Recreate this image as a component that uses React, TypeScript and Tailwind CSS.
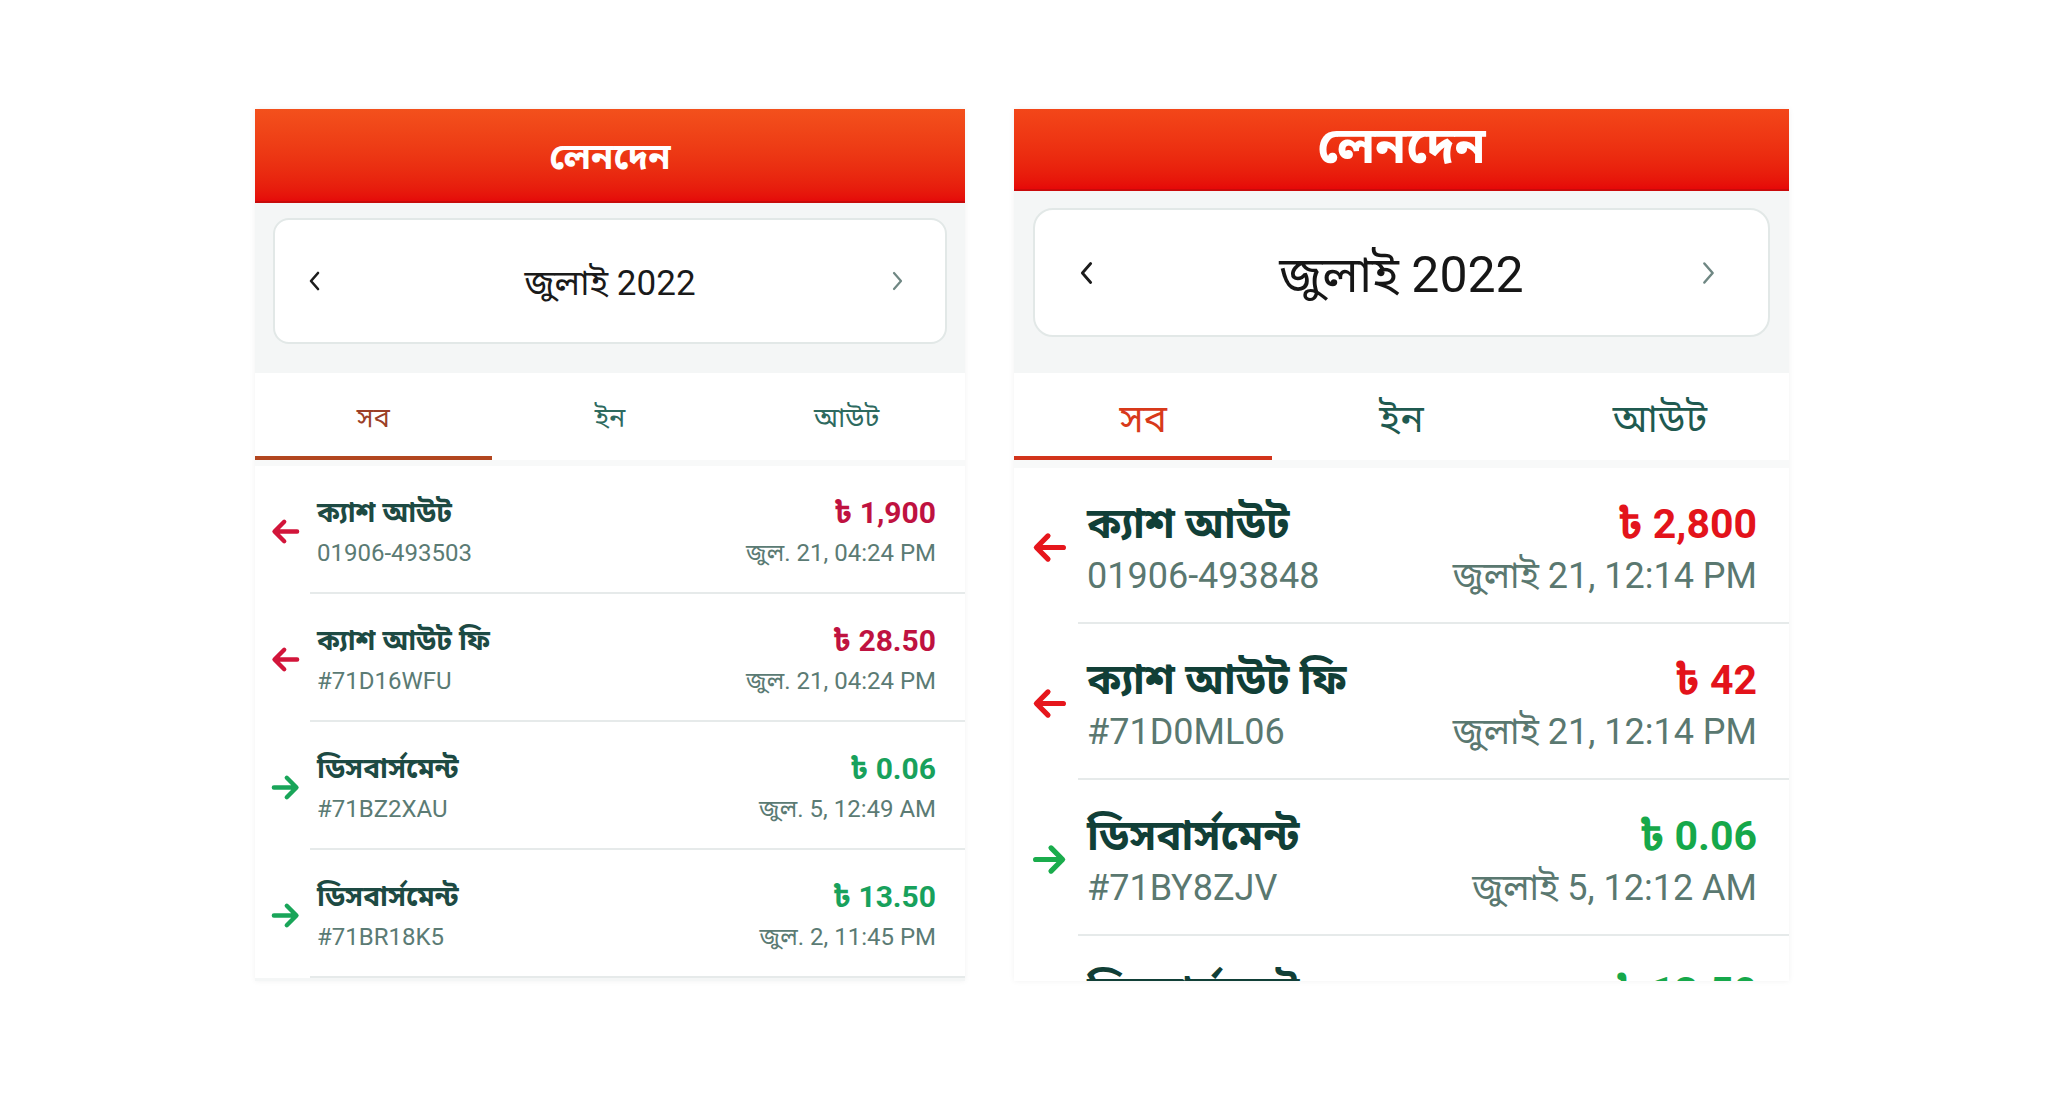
import React from "react";

const BN = "font-['Roboto','Noto_Sans_Bengali','Noto_Sans','Lohit_Bengali','FreeSans',sans-serif]";

type Tx = {
  title: string;
  sub: string;
  amount: string;
  date: string;
  dir: "out" | "in";
};

const leftRows: Tx[] = [
  { title: "ক্যাশ আউট", sub: "01906-493503", amount: "৳ 1,900", date: "জুল. 21, 04:24 PM", dir: "out" },
  { title: "ক্যাশ আউট ফি", sub: "#71D16WFU", amount: "৳ 28.50", date: "জুল. 21, 04:24 PM", dir: "out" },
  { title: "ডিসবার্সমেন্ট", sub: "#71BZ2XAU", amount: "৳ 0.06", date: "জুল. 5, 12:49 AM", dir: "in" },
  { title: "ডিসবার্সমেন্ট", sub: "#71BR18K5", amount: "৳ 13.50", date: "জুল. 2, 11:45 PM", dir: "in" },
];

const rightRows: Tx[] = [
  { title: "ক্যাশ আউট", sub: "01906-493848", amount: "৳ 2,800", date: "জুলাই 21, 12:14 PM", dir: "out" },
  { title: "ক্যাশ আউট ফি", sub: "#71D0ML06", amount: "৳ 42", date: "জুলাই 21, 12:14 PM", dir: "out" },
  { title: "ডিসবার্সমেন্ট", sub: "#71BY8ZJV", amount: "৳ 0.06", date: "জুলাই 5, 12:12 AM", dir: "in" },
  { title: "ডিসবার্সমেন্ট", sub: "#71BR18K5", amount: "৳ 13.50", date: "জুলাই 2, 11:45 PM", dir: "in" },
];

function Arrow({ dir, color, w, h }: { dir: "out" | "in"; color: string; w: number; h: number }) {
  const d = dir === "out" ? "M21 12H4 M11 4.5L3.5 12L11 19.5" : "M3 12H20 M13 4.5L20.5 12L13 19.5";
  return (
    <svg width={w} height={h} viewBox="0 0 24 24" fill="none">
      <path d={d} stroke={color} strokeWidth={3.4} strokeLinecap="round" strokeLinejoin="round" />
    </svg>
  );
}

function Chevron({ dir, color, w, h, sw }: { dir: "l" | "r"; color: string; w: number; h: number; sw: number }) {
  const d = dir === "l" ? "M9 2L2 10L9 18" : "M2 2L9 10L2 18";
  return (
    <svg width={w} height={h} viewBox="0 0 11 20" fill="none">
      <path d={d} stroke={color} strokeWidth={sw} strokeLinecap="round" strokeLinejoin="round" />
    </svg>
  );
}

function LeftPanel() {
  return (
    <div className={`w-[710px] h-[872px] overflow-hidden flex flex-col bg-[#f4f6f6] shadow-[0_0_6px_rgba(0,0,0,0.06)] ${BN}`}>
      <div className="h-[94px] shrink-0 flex items-center justify-center bg-gradient-to-b from-[#f3501c] to-[#e50a0a] border-b-2 border-[#c70b0b]">
        <span className="text-white font-bold text-[36px] leading-none pt-[4px]">লেনদেন</span>
      </div>
      <div className="h-[170px] shrink-0 px-[18px] pt-[15px] pb-[29px] flex">
        <div className="flex-1 rounded-[16px] bg-white border-2 border-[#e2e8e7] flex items-center justify-between pl-[34px] pr-[42px]">
          <Chevron dir="l" color="#1c1c1c" w={11} h={20} sw={2.6} />
          <span className="text-[35px] text-[#1a1a1a] leading-none pt-[4px] ml-[8px]">জুলাই 2022</span>
          <Chevron dir="r" color="#6f8783" w={11} h={20} sw={2.2} />
        </div>
      </div>
      <div className="h-[87px] shrink-0 bg-white grid grid-cols-3">
        <div className="flex flex-col">
          <div className="flex-1 flex items-center justify-center pt-[8px] text-[27px] leading-none text-[#9c3f27]">সব</div>
          <div className="h-[4px] bg-[#b2461f]"></div>
        </div>
        <div className="flex flex-col">
          <div className="flex-1 flex items-center justify-center pt-[8px] text-[27px] leading-none text-[#2e6a5f]">ইন</div>
          <div className="h-[4px]"></div>
        </div>
        <div className="flex flex-col">
          <div className="flex-1 flex items-center justify-center pt-[8px] text-[27px] leading-none text-[#2e6a5f]">আউট</div>
          <div className="h-[4px]"></div>
        </div>
      </div>
      <div className="h-[6px] shrink-0 bg-[#f8f9f9]"></div>
      <div className="flex flex-col bg-white">
        {leftRows.map((r, i) => (
          <div key={i} className="h-[128px] shrink-0 flex">
            <div className="w-[55px] shrink-0 flex items-center justify-center pl-[6px] pt-[2px]">
              <Arrow dir={r.dir} color={r.dir === "out" ? "#d2153a" : "#19a559"} w={31} h={31} />
            </div>
            <div className="flex-1 border-b-2 border-[#e6eaea] pl-[7px] pr-[29px] pt-[30px] flex flex-col">
              <div className="flex items-center justify-between h-[34px]">
                <span className="text-[28px] leading-none font-bold text-[#1d4a43]">{r.title}</span>
                <span className={`text-[30px] leading-none font-bold ${r.dir === "out" ? "text-[#bf1240]" : "text-[#18a15c]"}`}>{r.amount}</span>
              </div>
              <div className="flex items-center justify-between h-[30px] mt-[8px]">
                <span className="text-[24px] leading-none text-[#5b7b74]">{r.sub}</span>
                <span className="text-[24px] leading-none text-[#5b7b74]">{r.date}</span>
              </div>
            </div>
          </div>
        ))}
      </div>
    </div>
  );
}

function RightPanel() {
  return (
    <div className={`w-[775px] h-[872px] overflow-hidden flex flex-col bg-[#f4f6f6] shadow-[0_0_6px_rgba(0,0,0,0.06)] ${BN}`}>
      <div className="h-[82px] shrink-0 flex items-center justify-center bg-gradient-to-b from-[#f34619] to-[#e60808] border-b-2 border-[#c90a0a]">
        <span className="text-white font-bold text-[50px] leading-none pb-[6px]">লেনদেন</span>
      </div>
      <div className="h-[182px] shrink-0 px-[19px] pt-[17px] pb-[36px] flex">
        <div className="flex-1 rounded-[20px] bg-white border-2 border-[#e2e8e7] flex items-center justify-between pl-[45px] pr-[53px]">
          <Chevron dir="l" color="#1c1c1c" w={13} h={24} sw={2.4} />
          <span className="text-[50px] text-[#161616] leading-none pt-[4px] ml-[8px]">জুলাই 2022</span>
          <Chevron dir="r" color="#6f8783" w={13} h={24} sw={2.1} />
        </div>
      </div>
      <div className="h-[87px] shrink-0 bg-white grid grid-cols-3">
        <div className="flex flex-col">
          <div className="flex-1 flex items-center justify-center pt-[9px] text-[39px] leading-none text-[#d8391a]">সব</div>
          <div className="h-[4px] bg-[#d2341b]"></div>
        </div>
        <div className="flex flex-col">
          <div className="flex-1 flex items-center justify-center pt-[9px] text-[39px] leading-none text-[#1f5a50]">ইন</div>
          <div className="h-[4px]"></div>
        </div>
        <div className="flex flex-col">
          <div className="flex-1 flex items-center justify-center pt-[9px] text-[39px] leading-none text-[#1f5a50]">আউট</div>
          <div className="h-[4px]"></div>
        </div>
      </div>
      <div className="h-[8px] shrink-0 bg-[#f8f9f9]"></div>
      <div className="flex flex-col bg-white">
        {rightRows.map((r, i) => (
          <div key={i} className="h-[156px] shrink-0 flex">
            <div className="w-[64px] shrink-0 flex items-center justify-center pl-[6px] pt-[2px]">
              <Arrow dir={r.dir} color={r.dir === "out" ? "#e6161c" : "#1aac4c"} w={37} h={37} />
            </div>
            <div className="flex-1 border-b-2 border-[#e6eaea] pl-[9px] pr-[32px] pt-[33px] flex flex-col">
              <div className="flex items-center justify-between h-[46px]">
                <span className="text-[42px] leading-none font-bold text-[#113f37]">{r.title}</span>
                <span className={`text-[41px] leading-none font-bold ${r.dir === "out" ? "text-[#e3131b]" : "text-[#16a84a]"}`}>{r.amount}</span>
              </div>
              <div className="flex items-center justify-between h-[42px] mt-[8px]">
                <span className="text-[36px] leading-none text-[#5a7870]">{r.sub}</span>
                <span className="text-[36px] leading-none text-[#5a7870]">{r.date}</span>
              </div>
            </div>
          </div>
        ))}
      </div>
    </div>
  );
}

export default function App() {
  return (
    <div className="w-full h-[1093px] bg-white flex justify-center items-start pt-[109px] pr-[4px] gap-[49px]">
      <LeftPanel />
      <RightPanel />
    </div>
  );
}
